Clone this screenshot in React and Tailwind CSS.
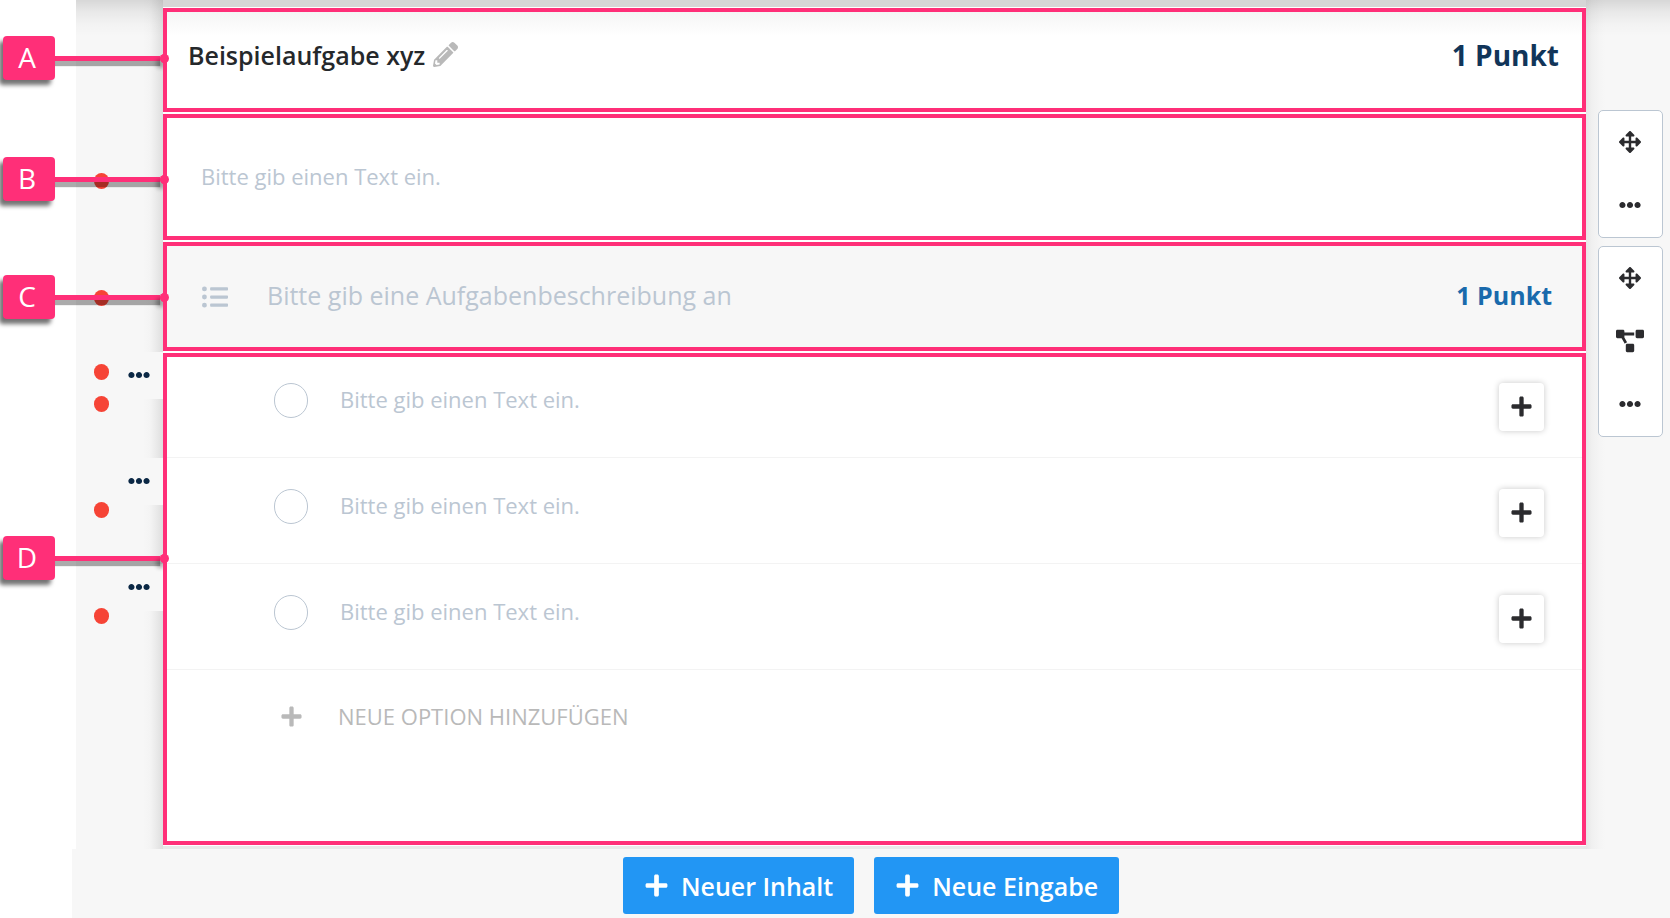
import { useState } from 'react'
import { FaArrowsAlt, FaEllipsisH, FaListUl, FaPencilAlt, FaPlus, FaProjectDiagram } from 'react-icons/fa'

const options = [
  { id: 1, markers: 2 },
  { id: 2, markers: 1 },
  { id: 3, markers: 1 },
]

const boxClass = 'my-px flex-1 border-4 border-[#ff2f78] bg-white'
const placeholderClass = 'min-w-0 flex-1 bg-transparent outline-none placeholder:text-[#bbc6d2] placeholder:opacity-100'

// pink letter with the line that points to its box
const Callout = ({ letter, className }) => (
  <div className={`absolute left-[3px] z-20 flex items-center ${className}`}>
    <span className="z-10 flex h-11 w-[52px] items-center justify-center rounded-sm bg-[#ff2f78] pr-1 pb-[2px] text-[28px] leading-8 text-white shadow-[-4px_5px_4px_rgba(0,0,0,0.55)]">
      {letter}
    </span>
    <span className="flex h-[9px] w-[108px] items-center overflow-x-clip">
      <span className="h-[5px] w-[105px] shrink-0 bg-[#ff2f78] shadow-[0_5px_1px_rgba(0,0,0,0.33)]" />
      <span className="h-[9px] w-[9px] shrink-0 rounded-full bg-[#ff2f78] shadow-[-4px_5px_4px_rgba(0,0,0,0.3)]" />
    </span>
    <span className="-ml-[3px] h-[9px] w-[9px] rounded-full bg-[#ff2f78]" />
  </div>
)

const Marker = () => <span className="block h-4 w-[15px] rounded-full bg-[#f64436]" />

const Gutter = ({ children, className = '' }) => (
  <div className="flex w-[163px] shrink-0 pl-[76px]">
    <div className={`flex-1 bg-[#f7f7f7] bg-[linear-gradient(to_left,#dedede_0,#e9e9e9_6px,#f4f4f4_13px,#f7f7f7_20px)] ${className}`}>
      {children}
    </div>
  </div>
)

const TopShade = () => (
  <div className="h-9 bg-[linear-gradient(to_bottom,rgba(0,0,0,0.13)_0,rgba(0,0,0,0.06)_12px,rgba(0,0,0,0.02)_24px,transparent)]" />
)

const ToolButton = ({ label, children }) => (
  <button type="button" aria-label={label} className="flex h-[63px] w-full items-center justify-center pr-px pb-[2px]">
    {children}
  </button>
)

const Toolbar = ({ children }) => (
  <div className="w-[65px] rounded-[5px] border border-[#bbc6d2] bg-white text-[22px] text-[#2b2b2e]">{children}</div>
)

const App = () => {
  const [selected, setSelected] = useState(null)

  return (
    <div className="min-h-screen bg-white font-['Open_Sans',sans-serif] text-[#25282b]">
      <div className="flex">
        <main className="min-w-0 flex-1">
          {/* header */}
          <section className="relative flex">
            <Callout letter="A" className="top-9" />
            <Gutter>
              <TopShade />
            </Gutter>
            <div className="flex min-w-0 flex-1 flex-col">
              <div className="h-[7px] bg-[#d6d6d6]" />
              <div className="my-px flex h-[104px] items-center justify-between border-4 border-[#ff2f78] bg-linear-to-b from-[#f5f5f5] to-white to-25% pr-[23px] pb-[11px] pl-[21px]">
                <div className="flex items-center gap-2">
                  <h1 className="text-[25px] leading-8 font-semibold">Beispielaufgabe xyz</h1>
                  <button type="button" aria-label="Titel bearbeiten" className="text-[25px] text-[#b9b9b9]">
                    <FaPencilAlt />
                  </button>
                </div>
                <p className="text-[28px] leading-8 font-bold text-[#113559]">1 Punkt</p>
              </div>
            </div>
          </section>

          {/* text block */}
          <section className="relative flex">
            <Callout letter="B" className="top-11" />
            <Gutter className="pt-[60px] pl-[18px]">
              <Marker />
            </Gutter>
            <div className={`${boxClass} flex h-[126px] items-center pr-8 pb-[2px] pl-[34px]`}>
              <input aria-label="Text" placeholder="Bitte gib einen Text ein." className={`${placeholderClass} text-[22px] leading-8`} />
            </div>
          </section>

          {/* task description */}
          <section className="relative flex">
            <Callout letter="C" className="top-[34px]" />
            <Gutter className="pt-[49px] pl-[18px]">
              <Marker />
            </Gutter>
            <div className="my-px flex h-[109px] flex-1 items-center border-4 border-[#ff2f78] bg-[#f7f7f7] pr-[30px] pl-[35px]">
              <FaListUl className="mr-[39px] text-[26px] text-[#bbc6d2]" />
              <input
                aria-label="Aufgabenbeschreibung"
                placeholder="Bitte gib eine Aufgabenbeschreibung an"
                className={`${placeholderClass} pb-[3px] text-[25px] leading-8`}
              />
              <p className="pb-[3px] text-[25px] leading-8 font-bold text-[#196aac]">1 Punkt</p>
            </div>
          </section>

          {/* answer options */}
          <section className="relative flex">
            <Callout letter="D" className="top-[184px]" />
            <Gutter>
              {options.map((option) => (
                <div key={option.id} className="flex h-[106px] items-start justify-between pl-[18px]">
                  <div className="flex h-[60px] flex-col justify-end gap-4">
                    {Array.from({ length: option.markers }, (_, i) => (
                      <Marker key={i} />
                    ))}
                  </div>
                  <button
                    type="button"
                    aria-label={`Option ${option.id} Menü`}
                    className="flex h-[47px] w-12 items-center justify-center bg-[#f7f7f7] pb-px text-[22px] text-[#0b2845]"
                  >
                    <FaEllipsisH />
                  </button>
                </div>
              ))}
            </Gutter>
            <div className={`${boxClass} h-[492px]`}>
              {options.map((option) => (
                <div key={option.id} className="flex h-[106px] items-end border-b border-[#f3f3f3] pr-[38px] pl-[107px] first:h-[101px]">
                  <input
                    type="radio"
                    name="option"
                    aria-label={`Option ${option.id}`}
                    checked={selected === option.id}
                    onChange={() => setSelected(option.id)}
                    className="mb-[39px] h-[35px] w-[34px] appearance-none rounded-full border border-[#bbc6d2] checked:bg-[#bbc6d2]"
                  />
                  <input
                    aria-label={`Text der Option ${option.id}`}
                    placeholder="Bitte gib einen Text ein."
                    className={`${placeholderClass} mb-[42px] ml-8 text-[22px] leading-8`}
                  />
                  <button
                    type="button"
                    aria-label="Hinzufügen"
                    className="mb-[26px] flex h-12 w-[45px] items-center justify-center rounded-[4px] bg-white pb-px text-[23px] text-[#2b2b2e] shadow-[0_0_6px_rgba(0,0,0,0.22)]"
                  >
                    <FaPlus />
                  </button>
                </div>
              ))}
              <button type="button" className="mt-[30px] ml-[107px] flex items-center text-[22px] leading-8 text-[#b9b9b9]">
                <span className="flex w-[34px] justify-center text-[23px]">
                  <FaPlus />
                </span>
                <span className="ml-[30px]">NEUE OPTION HINZUFÜGEN</span>
              </button>
            </div>
          </section>

          <div className="flex h-[3px]">
            <Gutter />
            <div className="flex-1 bg-[#e9e9e9]" />
          </div>
        </main>

        <aside className="w-[84px] shrink-0 bg-[#f7f7f7] bg-[linear-gradient(to_right,#e7e7e7_0,#f0f0f0_6px,#f5f5f5_14px,#f7f7f7_20px)]">
          <TopShade />
          <div className="mt-[74px] flex flex-col gap-2 pl-3">
            <Toolbar>
              <ToolButton label="Verschieben">
                <FaArrowsAlt />
              </ToolButton>
              <ToolButton label="Mehr">
                <FaEllipsisH />
              </ToolButton>
            </Toolbar>
            <Toolbar>
              <ToolButton label="Verschieben">
                <FaArrowsAlt />
              </ToolButton>
              <ToolButton label="Struktur">
                <FaProjectDiagram className="text-[28px]" />
              </ToolButton>
              <ToolButton label="Mehr">
                <FaEllipsisH />
              </ToolButton>
            </Toolbar>
          </div>
        </aside>
      </div>

      <footer className="ml-[72px] flex h-[69px] items-start justify-center gap-5 bg-[#f7f7f7] pt-2 text-[25px] leading-8 font-semibold text-white">
        <button type="button" className="flex h-[57px] items-center gap-3 rounded-[3px] bg-[#2296f4] px-[21px]">
          <FaPlus />
          Neuer Inhalt
        </button>
        <button type="button" className="flex h-[57px] items-center gap-3 rounded-[3px] bg-[#2296f4] px-[21px]">
          <FaPlus />
          Neue Eingabe
        </button>
      </footer>
    </div>
  )
}

export default App
